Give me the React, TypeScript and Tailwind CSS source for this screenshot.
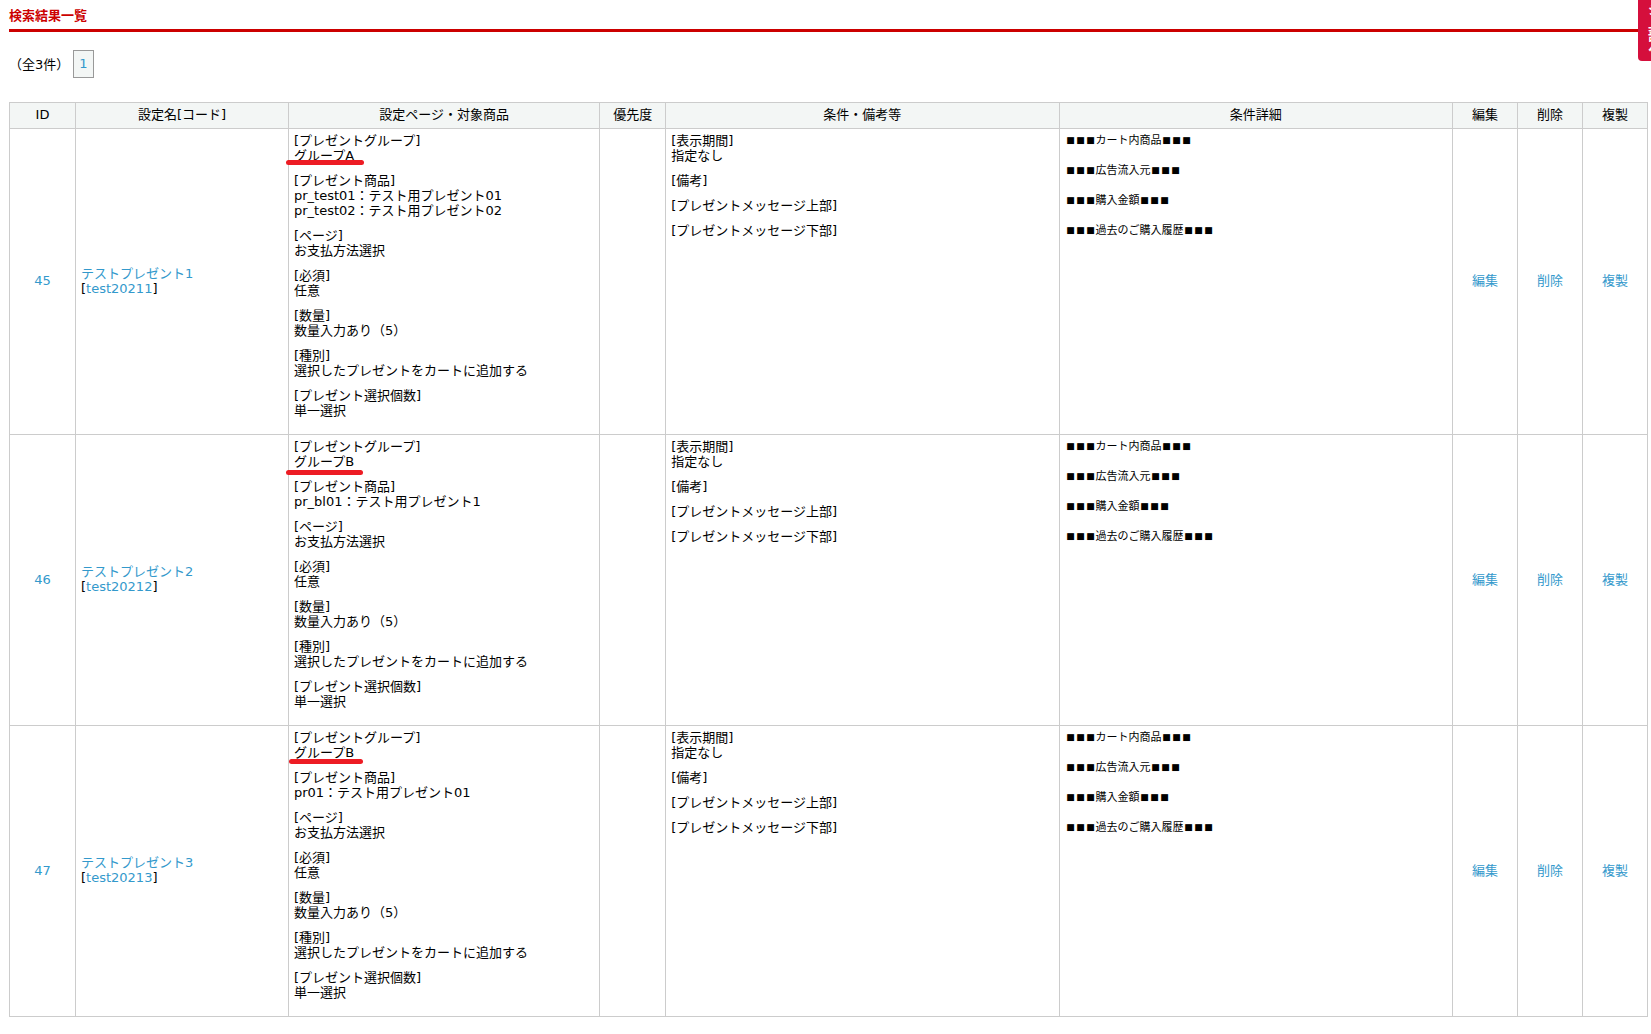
import type { ReactNode } from "react";

type Row = {
  id: number;
  name: string;
  code: string;
  group: string;
  products: string[];
  mark: string;
};

const ROWS: Row[] = [
  {
    id: 45,
    name: "テストプレゼント1",
    code: "test20211",
    group: "グループA",
    products: ["pr_test01：テスト用プレゼント01", "pr_test02：テスト用プレゼント02"],
    mark: "-left-2 top-[27px] w-[78px]",
  },
  {
    id: 46,
    name: "テストプレゼント2",
    code: "test20212",
    group: "グループB",
    products: ["pr_bl01：テスト用プレゼント1"],
    mark: "-left-2 top-[31px] w-[77px]",
  },
  {
    id: 47,
    name: "テストプレゼント3",
    code: "test20213",
    group: "グループB",
    products: ["pr01：テスト用プレゼント01"],
    mark: "-left-[5px] top-[29px] w-[74px]",
  },
];

// the two condition columns share whatever width is left
const COLUMNS = [
  { label: "ID", width: "w-[66px]" },
  { label: "設定名[コード]", width: "w-[13%]" },
  { label: "設定ページ・対象商品", width: "w-[19%]" },
  { label: "優先度", width: "w-[66px]" },
  { label: "条件・備考等", width: "" },
  { label: "条件詳細", width: "" },
  { label: "編集", width: "w-[65px]" },
  { label: "削除", width: "w-[65px]" },
  { label: "複製", width: "w-[65px]" },
];

const DETAILS = ["カート内商品", "広告流入元", "購入金額", "過去のご購入履歴"];

function Block({ title, lines = [], children }: { title: string; lines?: string[]; children?: ReactNode }) {
  return (
    <div className="relative mb-2.5">
      <p>[{title}]</p>
      {lines.map((line) => (
        <p key={line}>{line}</p>
      ))}
      {children}
    </div>
  );
}

function Squares() {
  return (
    <span className="grid grid-cols-[10px_10px_10px] text-center text-[9px]">
      <span>■</span>
      <span>■</span>
      <span>■</span>
    </span>
  );
}

function Cell({ children, className = "" }: { children?: ReactNode; className?: string }) {
  return <td className={`border border-[#ccc] px-[5px] pt-1 pb-1.5 ${className}`}>{children}</td>;
}

function TextLink({ children }: { children: ReactNode }) {
  return (
    <a href="#" className="text-[#3399cc] hover:underline">
      {children}
    </a>
  );
}

export default function App() {
  return (
    <div className="overflow-x-hidden bg-white pr-[3px] pb-4 pl-[9px] font-['DejaVu_Sans','Noto_Sans_CJK_JP',sans-serif] text-[13px] leading-[15px] text-black">
      <a
        href="#top"
        className="fixed top-0 -right-6 h-[61px] w-[37px] overflow-hidden rounded-bl bg-[#d50f3c] text-white"
      >
        <span className="absolute bottom-1.5 left-2 font-bold whitespace-nowrap [writing-mode:vertical-rl]">
          ページ上部へ
        </span>
      </a>

      <h1 className="border-b-3 border-[#cc0000] pt-2 pb-1.5 font-bold text-[#cc0000]">検索結果一覧</h1>

      <div className="mt-[18px] mb-6 flex items-center gap-1">
        <p>（全3件）</p>
        <a href="#" className="border border-[#999] bg-[#f3f6f5] px-[5px] pt-[5px] pb-1.5 text-[#3399cc]">
          1
        </a>
      </div>

      <table className="w-full table-fixed border-collapse">
        <thead>
          <tr>
            {COLUMNS.map((col) => (
              <th
                key={col.label}
                className={`border border-[#ccc] bg-[#f3f6f5] px-[5px] pt-1 pb-1.5 font-normal ${col.width}`}
              >
                {col.label}
              </th>
            ))}
          </tr>
        </thead>
        <tbody>
          {ROWS.map((row) => (
            <tr key={row.id}>
              <Cell className="text-center">
                <TextLink>{row.id}</TextLink>
              </Cell>
              <Cell>
                <p>
                  <TextLink>{row.name}</TextLink>
                </p>
                <p>
                  [<TextLink>{row.code}</TextLink>]
                </p>
              </Cell>
              <Cell className="align-top">
                <Block title="プレゼントグループ" lines={[row.group]}>
                  <span className={`absolute h-[5px] rounded-full bg-[#ed1c24] ${row.mark}`} />
                </Block>
                <Block title="プレゼント商品" lines={row.products} />
                <Block title="ページ" lines={["お支払方法選択"]} />
                <Block title="必須" lines={["任意"]} />
                <Block title="数量" lines={["数量入力あり（5）"]} />
                <Block title="種別" lines={["選択したプレゼントをカートに追加する"]} />
                <Block title="プレゼント選択個数" lines={["単一選択"]} />
              </Cell>
              <Cell />
              <Cell className="align-top">
                <Block title="表示期間" lines={["指定なし"]} />
                <Block title="備考" />
                <Block title="プレゼントメッセージ上部" />
                <Block title="プレゼントメッセージ下部" />
              </Cell>
              <Cell className="align-top text-[11px] leading-[15px]">
                {DETAILS.map((item) => (
                  <p key={item} className="mb-[15px] flex pl-px">
                    <Squares />
                    {item}
                    <Squares />
                  </p>
                ))}
              </Cell>
              {["編集", "削除", "複製"].map((action) => (
                <Cell key={action} className="text-center">
                  <TextLink>{action}</TextLink>
                </Cell>
              ))}
            </tr>
          ))}
        </tbody>
      </table>
    </div>
  );
}
